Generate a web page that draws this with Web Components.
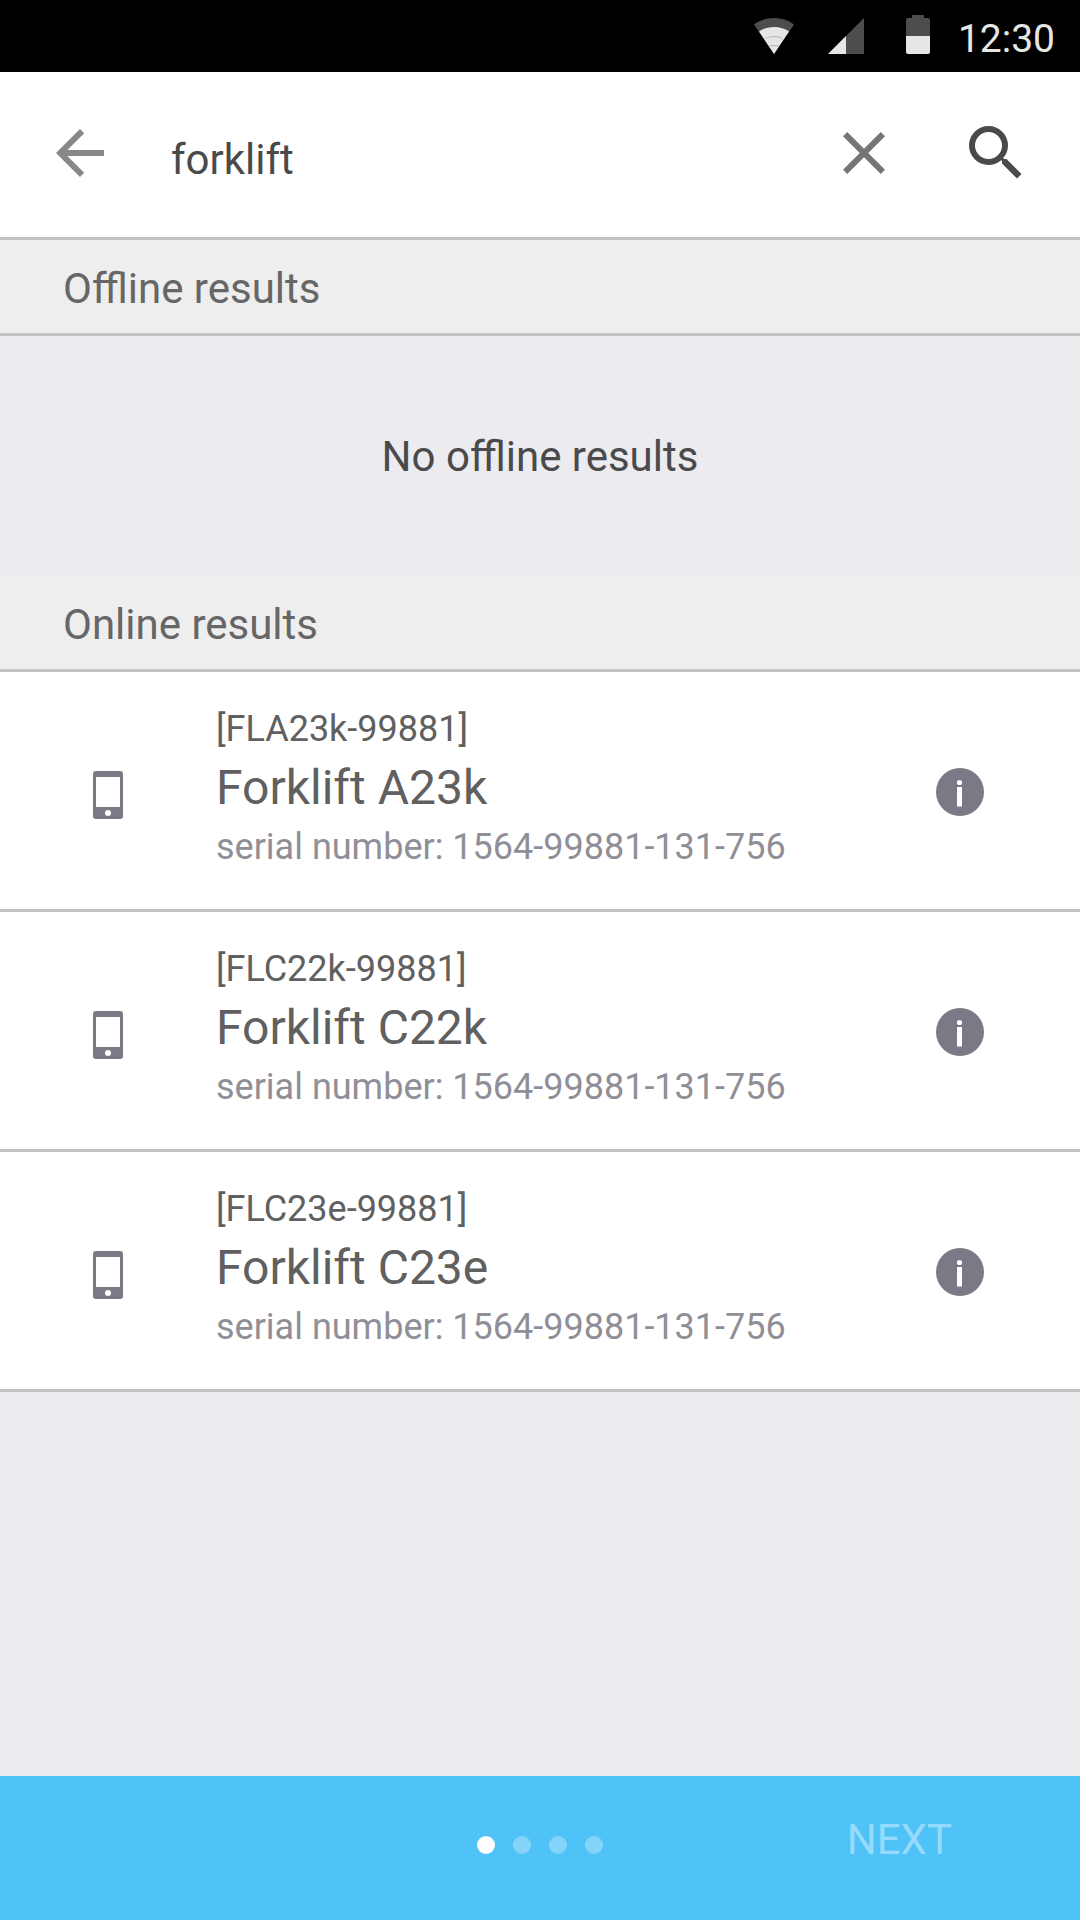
<!DOCTYPE html>
<html lang="en">
<head>
<meta charset="utf-8">
<meta name="viewport" content="width=device-width, initial-scale=1">
<title>Search</title>
<style>
  html, body { margin: 0; }
  body {
    font-family: Roboto, "Noto Sans", sans-serif;
    background: #ebebf0;
    color: #4a4a4a;
  }
</style>
</head>
<body>
<search-page></search-page>

<script>
const define = (name, html) => {
  const template = document.createElement('template');
  template.innerHTML = html;
  customElements.define(name, class extends HTMLElement {
    constructor() {
      super();
      this.attachShadow({ mode: 'open' }).append(template.content.cloneNode(true));
    }
  });
};

define('status-bar', `
  <style>
    :host { display: flex; align-items: center; justify-content: flex-end; height: 72px; padding-right: 25px; background: #000; color: #e6e6e6; font-size: 39px; line-height: 48px; }
    svg { display: block; flex: none; }
    .wifi { margin-right: 34px; }
    .signal { margin-right: 42px; }
    .battery { margin-right: 28px; }
    time { padding-top: 5px; }
  </style>
  <svg class="wifi" width="40" height="42" viewBox="0 -3 40 42" aria-hidden="true">
    <path fill="#4d4d4d" d="M0 6.400C6 2 13 0 20 0s14 2 20 6.400L20 36z"/>
    <path fill="#e6e6e6" d="M5 13.500C9 10.500 14.500 9 20 9s11 1.500 15 4.500L20 36z"/>
    <path fill="none" stroke="#b5b5b5" stroke-width="1" d="M11.500 20.500C16 18 24 18 28.500 20.500M15.500 28q4.500-1.200 9 0"/>
  </svg>
  <svg class="signal" width="36" height="36" viewBox="0 0 36 36" aria-hidden="true">
    <path fill="#4d4d4d" d="M0 36L36 0V36z"/><path fill="#e6e6e6" d="M0 36L18 18V36z"/>
  </svg>
  <svg class="battery" width="24" height="42" viewBox="0 -3 24 42" aria-hidden="true">
    <path fill="#4d4d4d" d="M6-3h12v3h4q2 0 2 2v16H0V2Q0 0 2 0h4z"/>
    <path fill="#e6e6e6" d="M0 18h24v16q0 2-2 2H2q-2 0-2-2z"/>
  </svg>
  <time>12:30</time>`);

define('search-bar', `
  <style>
    :host { display: flex; align-items: center; padding: 45px 48px 48px 44px; background: #fff; border-bottom: 3px solid #c2c2c2; }
    button { flex: none; width: 72px; height: 72px; border: 0; padding: 0; background: none; color: #4a4a4a; }
    .back { color: #888; margin-right: 55px; }
    .clear { color: #757575; margin: 0 60px; }
    svg { display: block; fill: currentColor; }
    input { flex: 1; min-width: 0; box-sizing: border-box; height: 72px; border: 0; outline: 0; padding: 12px 0 0; background: none; font: 42px/48px Roboto, "Noto Sans", sans-serif; color: #4a4a4a; }
  </style>
  <button class="back" type="button" aria-label="Back"><svg width="72" height="72" viewBox="0 0 24 24"><path d="M20 11H7.800l5.600-5.600L12 4l-8 8 8 8 1.400-1.400L7.800 13H20z"/></svg></button>
  <input type="text" value="forklift" aria-label="Search">
  <button class="clear" type="button" aria-label="Clear"><svg width="72" height="72" viewBox="0 0 24 24"><path d="M19 6.400L17.600 5 12 10.600 6.400 5 5 6.400l5.600 5.600L5 17.600 6.400 19l5.600-5.600 5.600 5.600 1.400-1.400-5.600-5.600z"/></svg></button>
  <button type="button" aria-label="Search"><svg width="72" height="72" viewBox="0 0 24 24"><path d="M15.500 14h-.8l-.3-.3A6.500 6.500 0 0 0 16 9.500 6.500 6.500 0 1 0 9.500 16c1.600 0 3.100-.6 4.200-1.600l.3.300v.8l5 5 1.500-1.500-5-5zm-6 0a4.500 4.500 0 1 1 0-9 4.500 4.500 0 0 1 0 9z"/></svg></button>`);

define('section-title', `
  <style>
    :host { display: block; padding: 19px 63px 14px; background: #eee; border-bottom: 3px solid #c2c2c2; }
    h2 { margin: 0; font-size: 42px; line-height: 60px; font-weight: 400; color: #666; }
  </style>
  <h2><slot></slot></h2>`);

define('empty-message', `
  <style>
    :host { display: block; padding: 91px 48px 89px; text-align: center; }
    p { margin: 0; font-size: 42px; line-height: 60px; }
  </style>
  <p><slot></slot></p>`);

define('result-item', `
  <style>
    :host { display: flex; align-items: center; padding: 34px 96px 34px 93px; background: #fff; border-bottom: 3px solid #c2c2c2; color: #606060; }
    svg { display: block; flex: none; fill: #7a7986; }
    .text { flex: 1; min-width: 0; margin-left: 93px; padding-bottom: 5px; }
    .code { font-size: 36px; line-height: 46px; }
    .name { margin: 0; font-size: 48px; line-height: 72px; font-weight: 400; }
    .serial { font-size: 36px; line-height: 46px; color: #908f97; }
    button { flex: none; border: 0; padding: 0; background: none; }
  </style>
  <svg width="30" height="57" viewBox="0 -9 30 57" aria-hidden="true">
    <path fill-rule="evenodd" d="M3 0h24q3 0 3 3v42q0 3-3 3H3q-3 0-3-3V3Q0 0 3 0zM3 6v30h24V6zM15 39a3 3 0 1 0 0 6 3 3 0 0 0 0-6z"/>
  </svg>
  <div class="text">
    <div class="code"><slot name="code"></slot></div>
    <h3 class="name"><slot></slot></h3>
    <div class="serial">serial number: <slot name="serial"></slot></div>
  </div>
  <button type="button" aria-label="Details">
    <svg width="48" height="51" viewBox="0 -3 48 51"><circle cx="24" cy="24" r="24"/><circle cx="23.500" cy="14.500" r="2.600" fill="#fff"/><path fill="#fff" d="M21 19h5v19.500h-5z"/></svg>
  </button>`);

define('step-footer', `
  <style>
    :host { display: grid; grid-template-columns: 1fr auto 1fr; align-items: center; box-sizing: border-box; height: 144px; padding: 0 128px 6px; background: #4fc2f8; }
    .dots { grid-column: 2; display: flex; gap: 18px; }
    i { width: 18px; height: 18px; border-radius: 50%; background: #84d4fa; }
    .on { background: #fff; }
    button { justify-self: end; border: 0; padding: 0 0 10px; background: none; font: 42px/60px Roboto, "Noto Sans", sans-serif; color: #96dbfb; }
  </style>
  <div class="dots" role="img" aria-label="Step 1 of 4"><i class="on"></i><i></i><i></i><i></i></div>
  <button type="button">NEXT</button>`);

define('search-page', `
  <style>
    :host { display: flex; flex-direction: column; min-height: 100vh; }
    main { flex: 1; }
  </style>
  <status-bar></status-bar>
  <search-bar></search-bar>
  <main>
    <section-title>Offline results</section-title>
    <empty-message>No offline results</empty-message>
    <section-title>Online results</section-title>
    <result-item><span slot="code">[FLA23k-99881]</span>Forklift A23k<span slot="serial">1564-99881-131-756</span></result-item>
    <result-item><span slot="code">[FLC22k-99881]</span>Forklift C22k<span slot="serial">1564-99881-131-756</span></result-item>
    <result-item><span slot="code">[FLC23e-99881]</span>Forklift C23e<span slot="serial">1564-99881-131-756</span></result-item>
  </main>
  <step-footer></step-footer>`);
</script>
</body>
</html>
